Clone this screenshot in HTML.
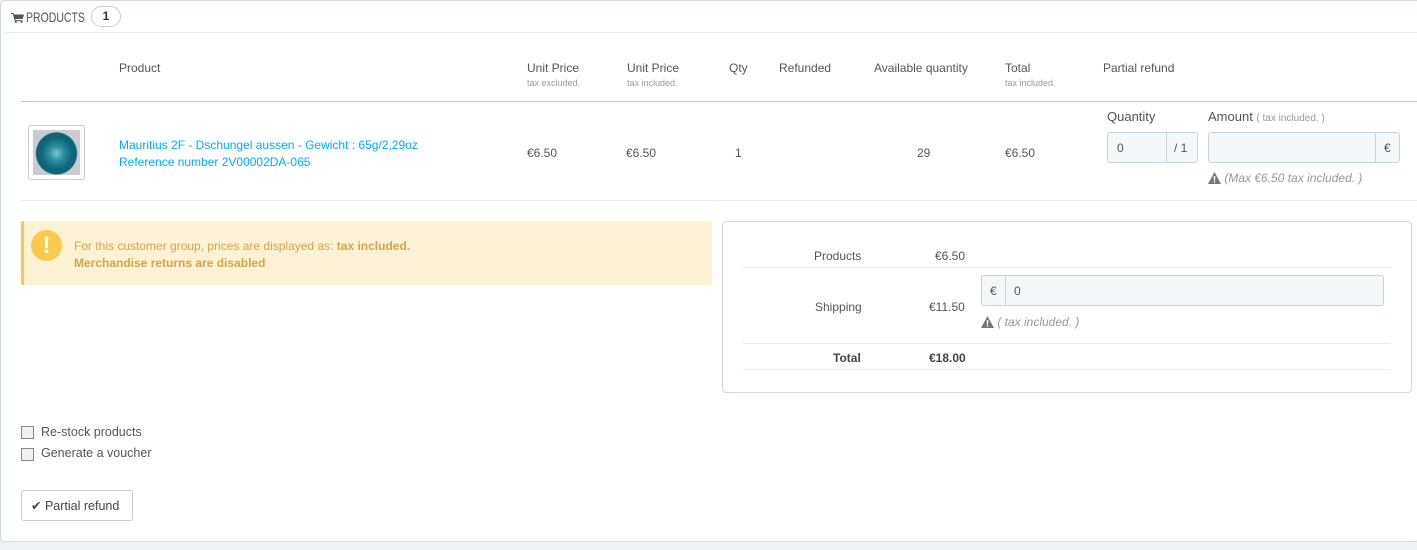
<!DOCTYPE html>
<html><head><meta charset="utf-8"><style>
*{margin:0;padding:0;box-sizing:border-box}
body{width:1417px;height:550px;background:#eff1f2;font-family:"Liberation Sans",sans-serif;font-size:12px;color:#555;position:relative;overflow:hidden}
.a{position:absolute;white-space:nowrap}
.panel{position:absolute;left:0;top:0;width:1420px;height:542px;background:#fff;border:1px solid #d3d8db;border-radius:5px}
.sm{font-size:9px;color:#999}
.hr{position:absolute;height:1px;background:#eaedef}
.inp{position:absolute;background:#f5f8f9;border:1px solid #c7d6db;border-radius:3px}
.b{font-weight:bold}
</style></head><body>
<div class="panel"></div>
<svg class="a" style="left:11px;top:12px" width="13" height="11" viewBox="0 0 13 11"><path d="M0 1h2.5l.6 1.5H13l-1.3 4.5H4.2l.4 1.2h7v1H3.8L1.8 2H0z" fill="#555"/><circle cx="4.8" cy="10" r="1" fill="#555"/><circle cx="10.5" cy="10" r="1" fill="#555"/></svg>
<div class="a" style="left:26px;top:9px;font-size:14px;color:#555;transform:scaleX(.75);transform-origin:left">PRODUCTS</div>
<div class="a" style="left:91px;top:6px;width:30px;height:21px;border:1px solid #ccc;border-radius:11px;text-align:center;line-height:19px;font-weight:bold;color:#333">1</div>
<div class="hr" style="left:5px;top:32px;width:1412px"></div>
<div class="a" style="left:119px;top:61px">Product</div>
<div class="a" style="left:527px;top:61px">Unit Price<br><span class="sm">tax excluded.</span></div>
<div class="a" style="left:627px;top:61px">Unit Price<br><span class="sm">tax included.</span></div>
<div class="a" style="left:729px;top:61px">Qty</div>
<div class="a" style="left:779px;top:61px">Refunded</div>
<div class="a" style="left:874px;top:61px">Available quantity</div>
<div class="a" style="left:1005px;top:61px">Total<br><span class="sm">tax included.</span></div>
<div class="a" style="left:1103px;top:61px">Partial refund</div>
<div class="hr" style="left:21px;top:101px;width:1396px;background:#a0d0e0"></div>
<div class="a" style="left:28px;top:125px;width:57px;height:55px;border:1px solid #ccc;border-radius:3px;padding:4px;background:#fff"><div style="width:47px;height:45px;background:radial-gradient(ellipse 45% 48% at 50% 52%,#7fc8c8 0,#2a8fa0 35%,#0f6478 75%,#0f6478 95%,#c9cdd0 100%);background-color:#c9cdd0"></div></div>
<div class="a" style="left:119px;top:137px;color:#00aff0;line-height:17px">Mauritius 2F - Dschungel aussen - Gewicht : 65g/2,29oz<br>Reference number 2V00002DA-065</div>
<div class="a" style="left:527px;top:146px">€6.50</div>
<div class="a" style="left:626px;top:146px">€6.50</div>
<div class="a" style="left:735px;top:146px">1</div>
<div class="a" style="left:917px;top:146px">29</div>
<div class="a" style="left:1005px;top:146px">€6.50</div>
<div class="a" style="left:1107px;top:109px;font-size:13px">Quantity</div>
<div class="a" style="left:1208px;top:109px;font-size:13px">Amount <span style="font-size:10px;color:#999">( tax included. )</span></div>
<div class="inp" style="left:1107px;top:132px;width:91px;height:31px"><span class="a" style="left:9px;top:8px">0</span><span class="a" style="left:58px;top:0;height:29px;border-left:1px solid #c7d6db;padding:8px 0 0 7px">/ 1</span></div>
<div class="inp" style="left:1208px;top:132px;width:192px;height:31px"><span class="a" style="left:166px;top:0;height:29px;border-left:1px solid #c7d6db;padding:8px 0 0 8px">€</span></div>
<div class="a" style="left:1208px;top:171px;color:#999;font-style:italic"><svg width="13" height="12" viewBox="0 0 13 12" style="vertical-align:-2px"><path d="M6.5 0L13 12H0z" fill="#777"/><rect x="5.8" y="4" width="1.4" height="4.5" fill="#fff"/><rect x="5.8" y="9.3" width="1.4" height="1.4" fill="#fff"/></svg> (Max €6.50 tax included. )</div>
<div class="hr" style="left:21px;top:200px;width:1396px"></div>
<div class="a" style="left:21px;top:221px;width:691px;height:64px;background:#fef2d5;border-left:3px solid #fcc94f;border-radius:2px"></div>
<div class="a" style="left:31px;top:230px;width:31px;height:31px;border-radius:50%;background:#fcc94f;color:#fff;font-weight:bold;font-size:24px;text-align:center;line-height:31px">!</div>
<div class="a" style="left:74px;top:238px;color:#d5a54a;line-height:17px">For this customer group, prices are displayed as: <b>tax included.</b><br><b>Merchandise returns are disabled</b></div>
<div class="a" style="left:722px;top:221px;width:690px;height:172px;border:1px solid #d3d8db;border-radius:4px;background:#fff"></div>
<div class="a" style="left:814px;top:249px">Products</div>
<div class="a" style="left:935px;top:249px">€6.50</div>
<div class="hr" style="left:743px;top:267px;width:648px"></div>
<div class="a" style="left:815px;top:300px">Shipping</div>
<div class="a" style="left:929px;top:300px">€11.50</div>
<div class="inp" style="left:981px;top:275px;width:403px;height:31px"><span class="a" style="left:0;top:0;height:29px;width:24px;border-right:1px solid #c7d6db;padding:8px 0 0 8px">€</span><span class="a" style="left:32px;top:8px">0</span></div>
<div class="a" style="left:981px;top:315px;color:#999;font-style:italic"><svg width="13" height="12" viewBox="0 0 13 12" style="vertical-align:-2px"><path d="M6.5 0L13 12H0z" fill="#777"/><rect x="5.8" y="4" width="1.4" height="4.5" fill="#fff"/><rect x="5.8" y="9.3" width="1.4" height="1.4" fill="#fff"/></svg> ( tax included. )</div>
<div class="hr" style="left:743px;top:343px;width:648px"></div>
<div class="a b" style="left:833px;top:351px;color:#444">Total</div>
<div class="a b" style="left:929px;top:351px;color:#444">€18.00</div>
<div class="hr" style="left:743px;top:369px;width:648px"></div>
<div class="a" style="left:21px;top:426px;width:13px;height:13px;border:1px solid #888;background:#f0f0f0"></div>
<div class="a" style="left:41px;top:425px;font-size:12.5px">Re-stock products</div>
<div class="a" style="left:21px;top:448px;width:13px;height:13px;border:1px solid #888;background:#f0f0f0"></div>
<div class="a" style="left:41px;top:446px;font-size:12.5px">Generate a voucher</div>
<div class="a" style="left:21px;top:490px;width:112px;height:31px;border:1px solid #ccc;border-radius:3px;background:#fff"></div>
<div class="a" style="left:31px;top:498px;font-size:12.5px;color:#444">✔ Partial refund</div>
</body></html>
